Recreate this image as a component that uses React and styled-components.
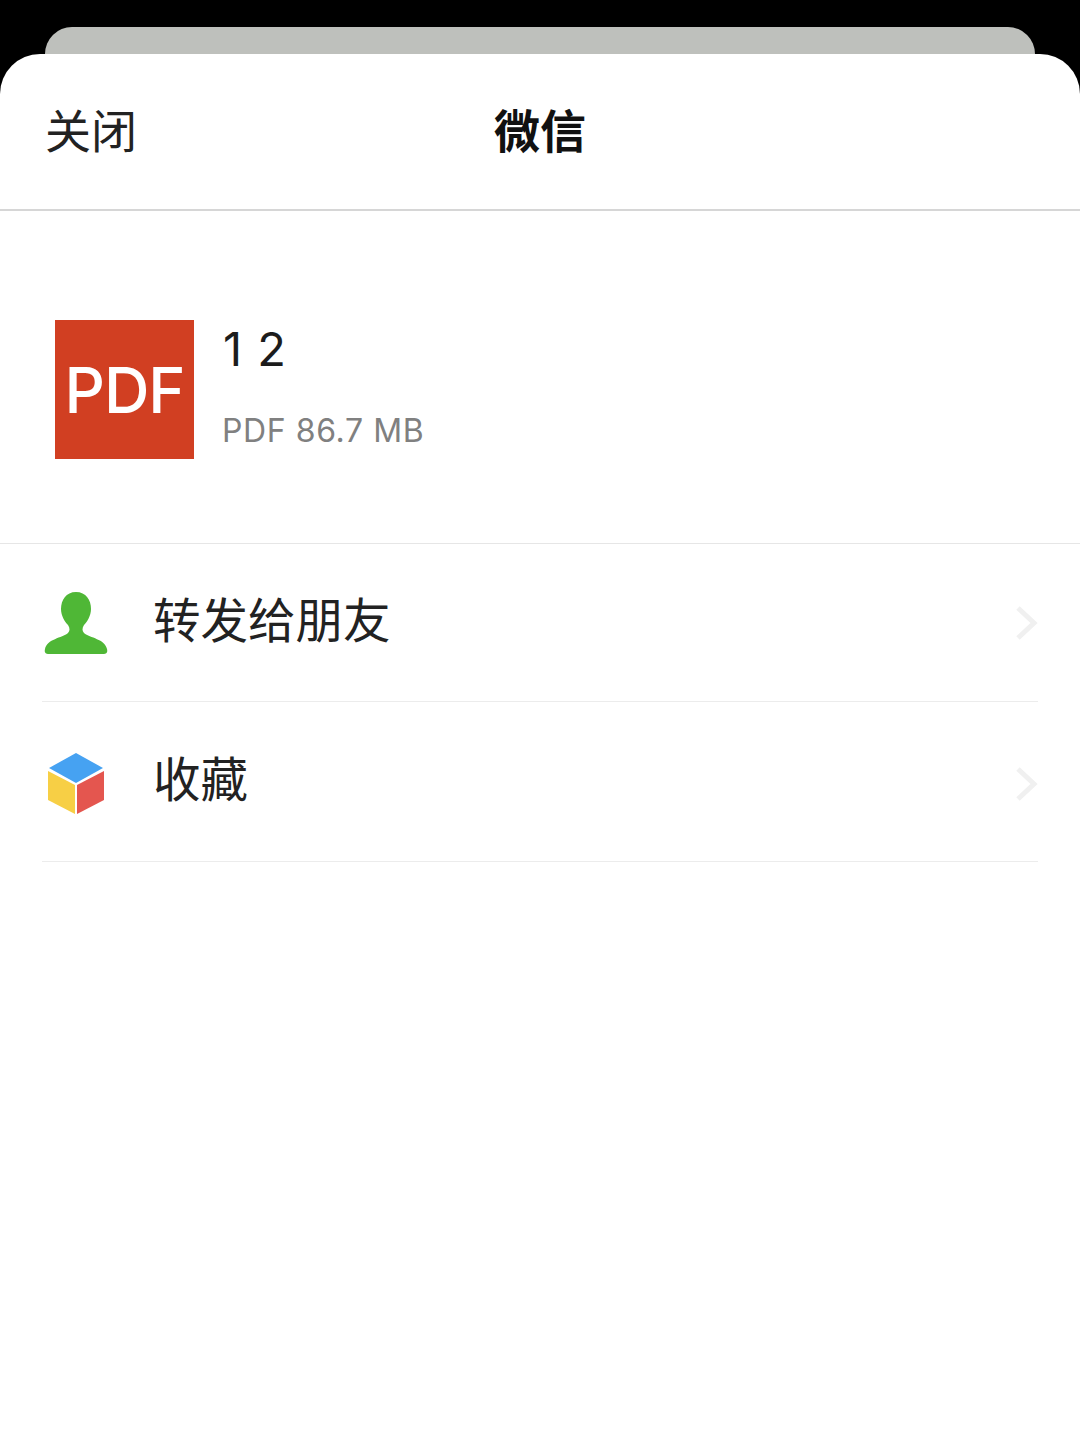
import React from 'react';
import styled, { createGlobalStyle } from 'styled-components';

const cjk = '"Noto Sans CJK SC", "Noto Sans", sans-serif';
const latin = 'Inter, "Liberation Sans", Arial, sans-serif';

const GlobalStyle = createGlobalStyle`
  html, body {
    margin: 0;
    padding: 0;
    background: #000;
  }
`;

const Screen = styled.div`
  width: 1080px;
  height: 1440px;
  background: #000;
  display: flex;
  flex-direction: column;
  padding-top: 27px;
  box-sizing: border-box;
  overflow: hidden;
`;

const BackCard = styled.div`
  height: 27px;
  margin: 0 45px;
  flex: none;
  background: #bec0bc;
  border-radius: 30px 30px 0 0;
`;

const Sheet = styled.div`
  flex: 1;
  background: #fff;
  border-radius: 40px 40px 0 0;
  display: flex;
  flex-direction: column;
`;

const Header = styled.header`
  height: 157px;
  flex: none;
  box-sizing: border-box;
  border-bottom: 2px solid #d6d6d6;
  display: grid;
  grid-template-columns: 1fr auto 1fr;
  align-items: center;
  padding: 0 45px 7px;
  font-family: ${cjk};
  font-size: 46px;
  color: #222;
`;

const CloseButton = styled.span`
  justify-self: start;
`;

const Title = styled.h1`
  margin: 0;
  font-size: 46px;
  font-weight: 700;
  color: #111;
`;

const FileInfo = styled.section`
  height: 333px;
  flex: none;
  box-sizing: border-box;
  border-bottom: 1px solid #e6e6e6;
  display: flex;
  align-items: center;
  gap: 28px;
  padding: 25px 0 0 55px;
`;

const PdfBadge = styled.div`
  width: 139px;
  height: 139px;
  background: #d13f22;
  color: #fff;
  display: flex;
  align-items: center;
  justify-content: center;
  font-family: ${latin};
  font-size: 63px;
  font-weight: 500;
  letter-spacing: -1px;
`;

const FileText = styled.div`
  height: 139px;
  display: flex;
  flex-direction: column;
  justify-content: space-between;
  font-family: ${latin};
`;

const FileName = styled.div`
  font-size: 47px;
  line-height: 58px;
  letter-spacing: 1px;
  padding-left: 1px;
  color: #1c1c1c;
`;

const FileMeta = styled.div`
  font-size: 32px;
  line-height: 44px;
  letter-spacing: 0.6px;
  margin-bottom: 6px;
  color: #808080;
`;

const ActionList = styled.div`
  display: flex;
  flex-direction: column;
  padding: 0 42px;
`;

const ActionRow = styled.div`
  height: ${p => p.$height}px;
  box-sizing: border-box;
  padding-top: ${p => p.$offset || 0}px;
  border-bottom: 1px solid #ececec;
  display: flex;
  align-items: center;
  font-family: ${cjk};
  font-size: 47.5px;
  color: #222;
`;

const IconSlot = styled.div`
  width: 68px;
  margin-right: 43px;
  display: flex;
  justify-content: center;
  flex: none;
`;

const ActionLabel = styled.span`
  flex: 1;
  padding-bottom: ${p => p.$lift}px;
`;

const Chevron = styled.svg`
  width: 24px;
  height: 36px;
  flex: none;
`;

const PersonIcon = () => (
  <svg width="64" height="64" viewBox="0 0 64 64">
    <path
      fill="#4fb736"
      d="M32 1C22 1 17 9 17 18C17 25 21 31 24 34C26 37 26 40 24 42C18 47 3 48 1 58C0 62 2 63 5 63H59C62 63 64 62 63 58C61 48 46 47 40 42C38 40 38 37 40 34C43 31 47 25 47 18C47 9 42 1 32 1Z"
    />
  </svg>
);

const CubeIcon = () => (
  <svg width="58" height="64" viewBox="0 0 58 64">
    <path fill="#46a2f2" d="M29 1 56 16 29 31 2 16Z" />
    <path fill="#f7cf45" d="M1 19 28 33V62L1 48Z" />
    <path fill="#e4564f" d="M30 33 57 19V48L30 62Z" />
  </svg>
);

const RowChevron = () => (
  <Chevron viewBox="0 0 24 36">
    <path d="M4 3 20 18 4 33" fill="none" stroke="#f0f0f0" strokeWidth="5" />
  </Chevron>
);

export default function App() {
  return (
    <>
      <GlobalStyle />
      <Screen>
        <BackCard />
        <Sheet>
          <Header>
            <CloseButton>关闭</CloseButton>
            <Title>微信</Title>
          </Header>
          <FileInfo>
            <PdfBadge>PDF</PdfBadge>
            <FileText>
              <FileName>1 2</FileName>
              <FileMeta>PDF 86.7 MB</FileMeta>
            </FileText>
          </FileInfo>
          <ActionList>
            <ActionRow $height={158}>
              <IconSlot><PersonIcon /></IconSlot>
              <ActionLabel $lift={10}>转发给朋友</ActionLabel>
              <RowChevron />
            </ActionRow>
            <ActionRow $height={160} $offset={4}>
              <IconSlot><CubeIcon /></IconSlot>
              <ActionLabel $lift={14}>收藏</ActionLabel>
              <RowChevron />
            </ActionRow>
          </ActionList>
        </Sheet>
      </Screen>
    </>
  );
}
